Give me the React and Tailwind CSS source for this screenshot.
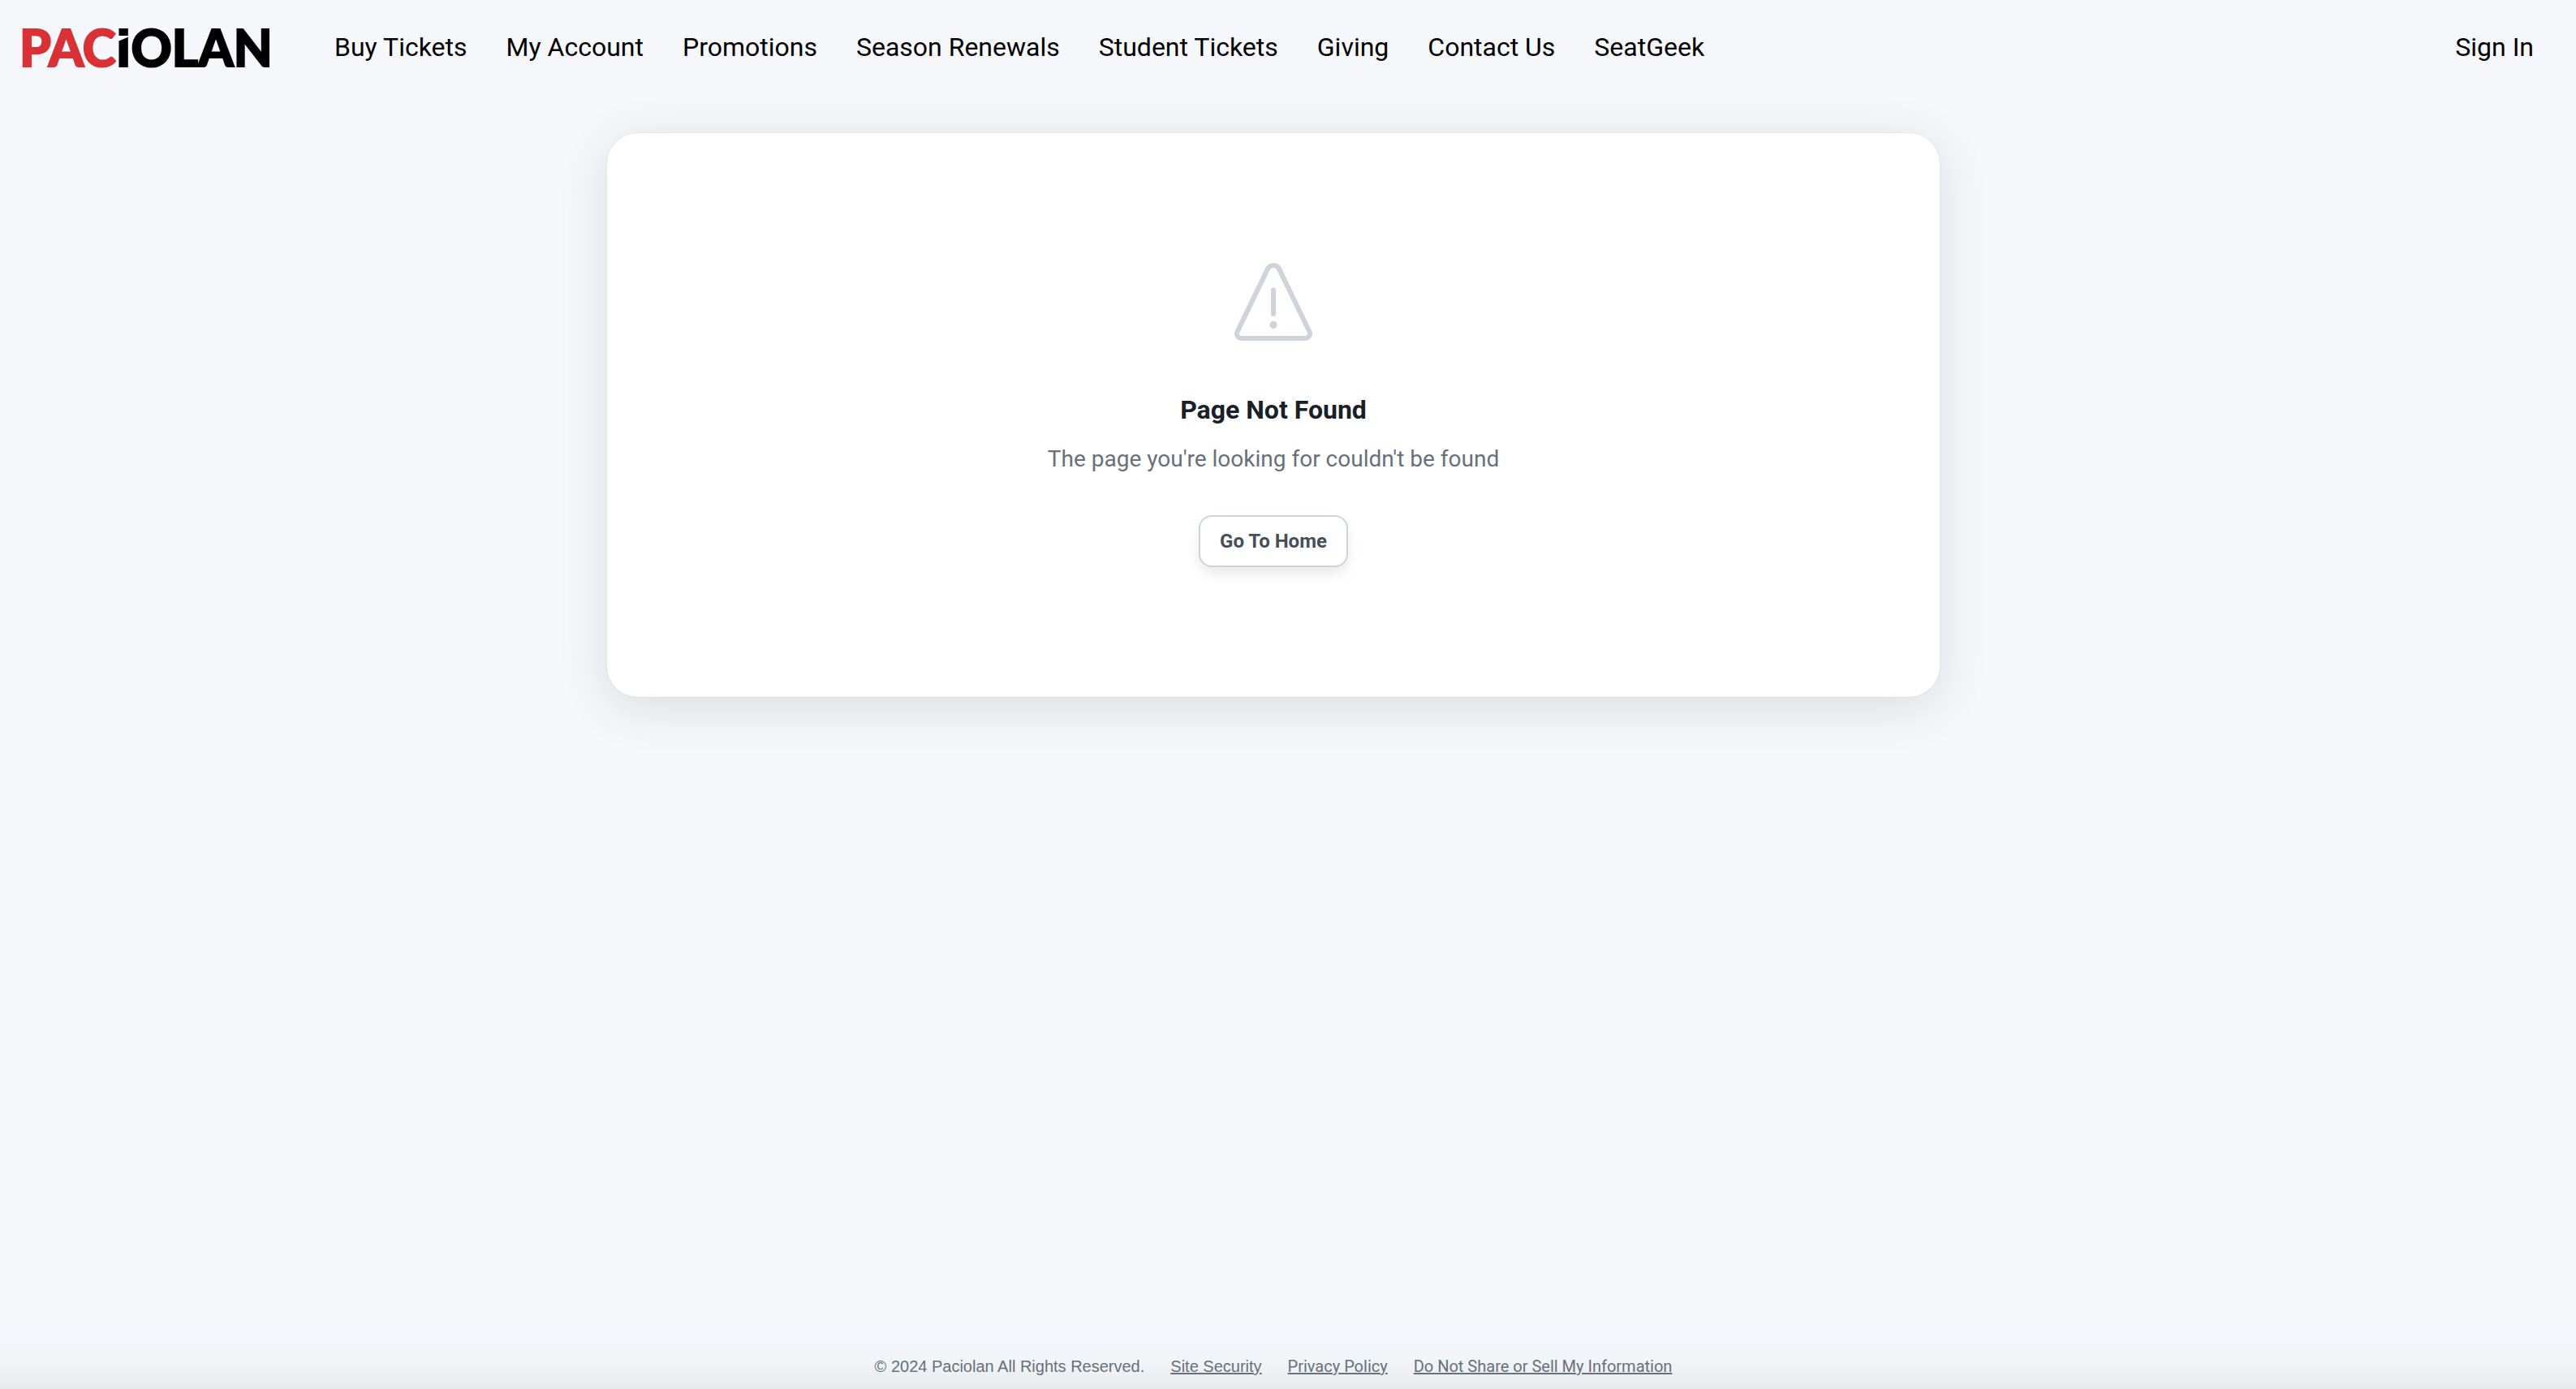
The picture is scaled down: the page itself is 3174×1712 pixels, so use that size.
const navItems = [
  'Buy Tickets',
  'My Account',
  'Promotions',
  'Season Renewals',
  'Student Tickets',
  'Giving',
  'Contact Us',
  'SeatGeek',
];

function Logo() {
  return (
    <a
      href="#home"
      aria-label="Paciolan"
      className="flex w-[312px] text-[62px] leading-[62px] font-black whitespace-nowrap text-black font-['Lato',sans-serif] [-webkit-text-stroke:2px_currentColor]"
    >
      <span className="text-[#d93236]">PAC</span>
      <span className="relative">
        I
        <svg
          aria-hidden="true"
          viewBox="0 0 20 8"
          preserveAspectRatio="none"
          className="absolute top-[17px] left-0 h-[8px] w-full"
        >
          <polygon points="0,0 20,0 0,8" fill="#f5f7fb" />
        </svg>
      </span>
      <span>OLAN</span>
    </a>
  );
}

function WarningIcon() {
  return (
    <svg
      aria-hidden="true"
      viewBox="0 0 96 96"
      className="size-24"
      fill="none"
      stroke="#ced4da"
      strokeWidth="6"
      strokeLinecap="round"
    >
      <path d="M41 7.4 L3.6 84.7 A5.8 5.8 0 0 0 8.8 93 H87.2 A5.8 5.8 0 0 0 92.4 84.7 L55 7.4 A7.8 7.8 0 0 0 41 7.4 Z" />
      <path d="M48 33.5 V63" />
      <circle cx="48" cy="76.5" r="4.7" fill="#ced4da" stroke="none" />
    </svg>
  );
}

export default function App() {
  return (
    <div className="flex min-h-screen flex-col bg-[#f5f7fb] pr-[36px] font-['Roboto',sans-serif]">
      <header className="flex h-[116px] items-center pl-6">
        <Logo />
        <nav className="ml-[76px] flex gap-12 text-[32px] leading-10 text-black">
          {navItems.map((item) => (
            <a key={item} href="#nav" className="whitespace-nowrap">
              {item}
            </a>
          ))}
        </nav>
        <a href="#sign-in" className="mr-4 ml-auto text-[32px] leading-10 whitespace-nowrap text-black">
          Sign In
        </a>
      </header>

      <main className="flex flex-1 flex-col items-center px-6 pt-12">
        <section className="flex w-full max-w-[1642px] flex-col items-center rounded-[38px] bg-white py-40 text-center shadow-[0_0_2px_rgba(33,43,54,0.1),0_12px_64px_rgba(0,0,0,0.11)]">
          <WarningIcon />
          <h1 className="mt-16 text-[32px] leading-[42px] font-bold text-[#1a2027]">Page Not Found</h1>
          <p className="mt-5 text-[28px] leading-10 text-[#67707b]">
            The page you're looking for couldn't be found
          </p>
          <button
            type="button"
            className="mt-[49px] h-16 rounded-2xl border-2 border-[#ced4da] bg-white px-6 text-2xl font-bold text-[#454f59] shadow-[0_8px_16px_rgba(0,0,0,0.09)]"
          >
            Go To Home
          </button>
        </section>
      </main>

      <footer className="-mr-[36px] flex h-[72px] items-center justify-center gap-8 bg-linear-to-b from-[#f4f8fc] via-[#f1f5f8] to-[#e8ebed] pt-4 pr-[36px] text-xl leading-6 text-[#67707b]">
        <span className="font-['Liberation_Sans',sans-serif]">© 2024 Paciolan All Rights Reserved.</span>
        <a href="#security" className="font-['Liberation_Sans',sans-serif] underline">
          Site Security
        </a>
        <a href="#privacy" className="underline">
          Privacy Policy
        </a>
        <a href="#do-not-share" className="underline">
          Do Not Share or Sell My Information
        </a>
      </footer>
    </div>
  );
}
